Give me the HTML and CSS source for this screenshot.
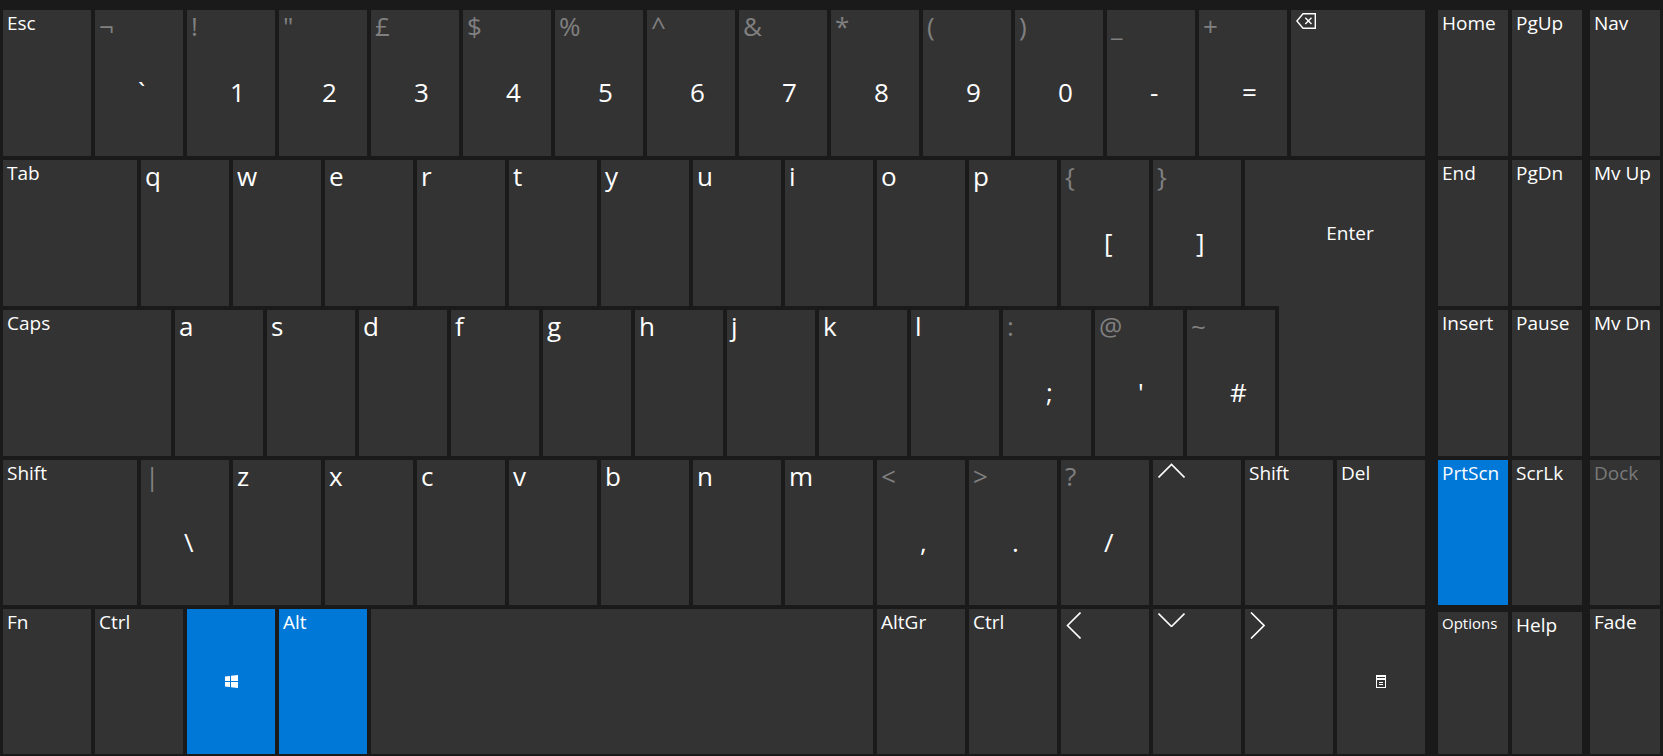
FILE: index.html
```html
<!DOCTYPE html>
<html lang="en">
<head>
<meta charset="utf-8">
<meta name="viewport" content="width=device-width, initial-scale=1">
<title>On-Screen Keyboard</title>
<link rel="stylesheet" href="styles.css">
</head>
<body>
<main class="keyboard">
  <section class="block block-main" aria-label="Main keys">
    <div class="row">
      <button class="key"><span class="name">Esc</span></button>
      <button class="key"><span class="alt">¬</span><span class="base">`</span></button>
      <button class="key"><span class="alt">!</span><span class="base">1</span></button>
      <button class="key"><span class="alt">"</span><span class="base">2</span></button>
      <button class="key"><span class="alt">£</span><span class="base">3</span></button>
      <button class="key"><span class="alt">$</span><span class="base">4</span></button>
      <button class="key"><span class="alt">%</span><span class="base">5</span></button>
      <button class="key"><span class="alt">^</span><span class="base">6</span></button>
      <button class="key"><span class="alt">&amp;</span><span class="base">7</span></button>
      <button class="key"><span class="alt">*</span><span class="base">8</span></button>
      <button class="key"><span class="alt">(</span><span class="base">9</span></button>
      <button class="key"><span class="alt">)</span><span class="base">0</span></button>
      <button class="key"><span class="alt">_</span><span class="base">-</span></button>
      <button class="key"><span class="alt">+</span><span class="base">=</span></button>
      <button class="key key-wide" aria-label="Backspace">
        <svg class="glyph" width="20" height="16" viewBox="0 0 20 16" fill="none" stroke="currentColor" stroke-width="1.4"><path d="M7 .7H19.3V15.3H7L.9 8ZM9.3 4.8l6.2 6.2M15.5 4.8l-6.2 6.2"/></svg>
      </button>
    </div>

    <div class="middle">
      <div class="row row-top">
        <button class="key key-wide"><span class="name">Tab</span></button>
        <button class="key"><span class="letter">q</span></button>
        <button class="key"><span class="letter">w</span></button>
        <button class="key"><span class="letter">e</span></button>
        <button class="key"><span class="letter">r</span></button>
        <button class="key"><span class="letter">t</span></button>
        <button class="key"><span class="letter">y</span></button>
        <button class="key"><span class="letter">u</span></button>
        <button class="key"><span class="letter">i</span></button>
        <button class="key"><span class="letter">o</span></button>
        <button class="key"><span class="letter">p</span></button>
        <button class="key"><span class="alt">{</span><span class="base">[</span></button>
        <button class="key"><span class="alt">}</span><span class="base">]</span></button>
      </div>
      <div class="row row-home">
        <button class="key key-caps"><span class="name">Caps</span></button>
        <button class="key"><span class="letter">a</span></button>
        <button class="key"><span class="letter">s</span></button>
        <button class="key"><span class="letter">d</span></button>
        <button class="key"><span class="letter">f</span></button>
        <button class="key"><span class="letter">g</span></button>
        <button class="key"><span class="letter">h</span></button>
        <button class="key"><span class="letter">j</span></button>
        <button class="key"><span class="letter">k</span></button>
        <button class="key"><span class="letter">l</span></button>
        <button class="key"><span class="alt">:</span><span class="base">;</span></button>
        <button class="key"><span class="alt">@</span><span class="base">'</span></button>
        <button class="key"><span class="alt">~</span><span class="base">#</span></button>
      </div>
      <button class="key key-enter"><span class="name">Enter</span></button>
    </div>

    <div class="row">
      <button class="key key-wide"><span class="name">Shift</span></button>
      <button class="key"><span class="alt">|</span><span class="base">\</span></button>
      <button class="key"><span class="letter">z</span></button>
      <button class="key"><span class="letter">x</span></button>
      <button class="key"><span class="letter">c</span></button>
      <button class="key"><span class="letter">v</span></button>
      <button class="key"><span class="letter">b</span></button>
      <button class="key"><span class="letter">n</span></button>
      <button class="key"><span class="letter">m</span></button>
      <button class="key"><span class="alt">&lt;</span><span class="base">,</span></button>
      <button class="key"><span class="alt">&gt;</span><span class="base">.</span></button>
      <button class="key"><span class="alt">?</span><span class="base">/</span></button>
      <button class="key" aria-label="Up">
        <svg class="glyph" width="27" height="15" viewBox="0 0 27 15" fill="none" stroke="currentColor" stroke-width="1.6"><path d="M.5 14.5 13.5 1.5l13 13"/></svg>
      </button>
      <button class="key"><span class="name">Shift</span></button>
      <button class="key"><span class="name">Del</span></button>
    </div>

    <div class="row">
      <button class="key"><span class="name">Fn</span></button>
      <button class="key"><span class="name">Ctrl</span></button>
      <button class="key key-on key-center" aria-label="Windows" aria-pressed="true">
        <svg width="13" height="13" viewBox="0 0 13 13" fill="currentColor"><path d="M0 1.5 5 .9V6H0ZM6 .7 13 0V6H6ZM0 7H5V12.1L0 11.5ZM6 7H13V13L6 12.3Z"/></svg>
      </button>
      <button class="key key-on" aria-pressed="true"><span class="name">Alt</span></button>
      <button class="key key-space" aria-label="Space"></button>
      <button class="key"><span class="name">AltGr</span></button>
      <button class="key"><span class="name">Ctrl</span></button>
      <button class="key" aria-label="Left">
        <svg class="glyph" width="15" height="27" viewBox="0 0 15 27" fill="none" stroke="currentColor" stroke-width="1.6"><path d="M14.5 .5 1.5 13.5l13 13"/></svg>
      </button>
      <button class="key" aria-label="Down">
        <svg class="glyph" width="27" height="15" viewBox="0 0 27 15" fill="none" stroke="currentColor" stroke-width="1.6"><path d="M.5 1.5 13.5 14.5l13-13"/></svg>
      </button>
      <button class="key" aria-label="Right">
        <svg class="glyph" width="15" height="27" viewBox="0 0 15 27" fill="none" stroke="currentColor" stroke-width="1.6"><path d="M1 .5 14 13.5l-13 13"/></svg>
      </button>
      <button class="key key-center" aria-label="Menu">
        <svg width="10" height="13" viewBox="0 0 10 13" fill="currentColor" shape-rendering="crispEdges"><path fill-rule="evenodd" d="M0 0H10V13H0ZM1 2V3H9V2ZM1 5V12H9V5Z"/><path d="M3 7H7V8H3ZM3 9H7V10H3Z"/></svg>
      </button>
    </div>
  </section>

  <section class="block block-nav" aria-label="Navigation keys">
    <button class="key"><span class="name">Home</span></button>
    <button class="key"><span class="name">PgUp</span></button>
    <button class="key"><span class="name">End</span></button>
    <button class="key"><span class="name">PgDn</span></button>
    <button class="key"><span class="name">Insert</span></button>
    <button class="key"><span class="name">Pause</span></button>
    <button class="key key-on" aria-pressed="true"><span class="name">PrtScn</span></button>
    <button class="key"><span class="name">ScrLk</span></button>
    <button class="key key-low"><span class="name name-small">Options</span></button>
    <button class="key key-low"><span class="name">Help</span></button>
  </section>

  <section class="block block-window" aria-label="Keyboard window">
    <button class="key"><span class="name">Nav</span></button>
    <button class="key"><span class="name">Mv Up</span></button>
    <button class="key"><span class="name">Mv Dn</span></button>
    <button class="key" disabled><span class="name">Dock</span></button>
    <button class="key"><span class="name">Fade</span></button>
  </section>
</main>
</body>
</html>
```

FILE: styles.css
```css
* {
  box-sizing: border-box;
}

body {
  margin: 0;
  background: #1a1a1a;
  color: #fff;
  font-family: "Segoe UI", "Open Sans", "Noto Sans", sans-serif;
}

.keyboard {
  display: grid;
  grid-template-columns: 1435fr 152fr 70fr;
  min-height: 100vh;
  padding: 10px 3px 2px;
}

.block {
  display: grid;
  grid-template-rows: 146fr 146fr 146fr 145fr 145fr;
  gap: 4px;
  min-width: 0;
}

.block-main {
  padding-right: 13px;
}

.block-nav {
  grid-template-columns: 1fr 1fr;
  padding-right: 8px;
}

.row {
  display: flex;
  gap: 4px;
  min-width: 0;
}

/* Two rows that share the stepped Enter key */
.middle {
  grid-row: span 2;
  display: grid;
  grid-template-columns: 1242fr 34fr 146fr;
  grid-template-rows: 1fr 1fr;
  row-gap: 4px;
}

.row-top {
  grid-area: 1 / 1 / 2 / 2;
  padding-right: 4px;
}

.row-home {
  grid-area: 2 / 1 / 3 / 3;
  padding-right: 4px;
}

.key {
  display: flex;
  flex: 88 1 0;
  flex-direction: column;
  align-items: flex-start;
  justify-content: flex-start;
  min-width: 0;
  margin: 0;
  padding: 0;
  border: 0;
  border-radius: 0;
  background: #333;
  color: #fff;
  font: inherit;
  text-align: left;
  white-space: nowrap;
}

.key:hover {
  background: #404040;
}

.key:disabled {
  background: #333;
  color: #7a7a7a;
}

.key-wide {
  flex-grow: 134;
}

.key-caps {
  flex-grow: 168;
}

.key-space {
  flex-grow: 502;
}

.key-on,
.key-on:hover {
  background: #0078d7;
}

.key-low {
  margin-top: 3px;
}

.key-center {
  align-items: center;
  justify-content: center;
}

.key-enter {
  grid-area: 1 / 2 / 3 / 4;
  align-items: center;
  padding: 60px 0 0 26px;
  clip-path: polygon(0 0, 100% 0, 100% 100%, 18.889% 100%, 18.889% calc(50% - 2px), 0 calc(50% - 2px));
}

.glyph {
  margin: 3px 5px;
}

.name {
  padding-left: 4px;
  font-size: 19px;
  line-height: 26px;
}

.name-small {
  font-size: 15px;
  line-height: 22px;
}

.letter,
.alt,
.base {
  font-size: 26px;
  line-height: 32px;
}

.letter,
.alt {
  padding-left: 4px;
}

.alt {
  color: #808080;
}

.base {
  display: flex;
  flex: 1;
  align-items: center;
  margin-left: calc(50% - 1px);
  padding-bottom: 14px;
}
```
